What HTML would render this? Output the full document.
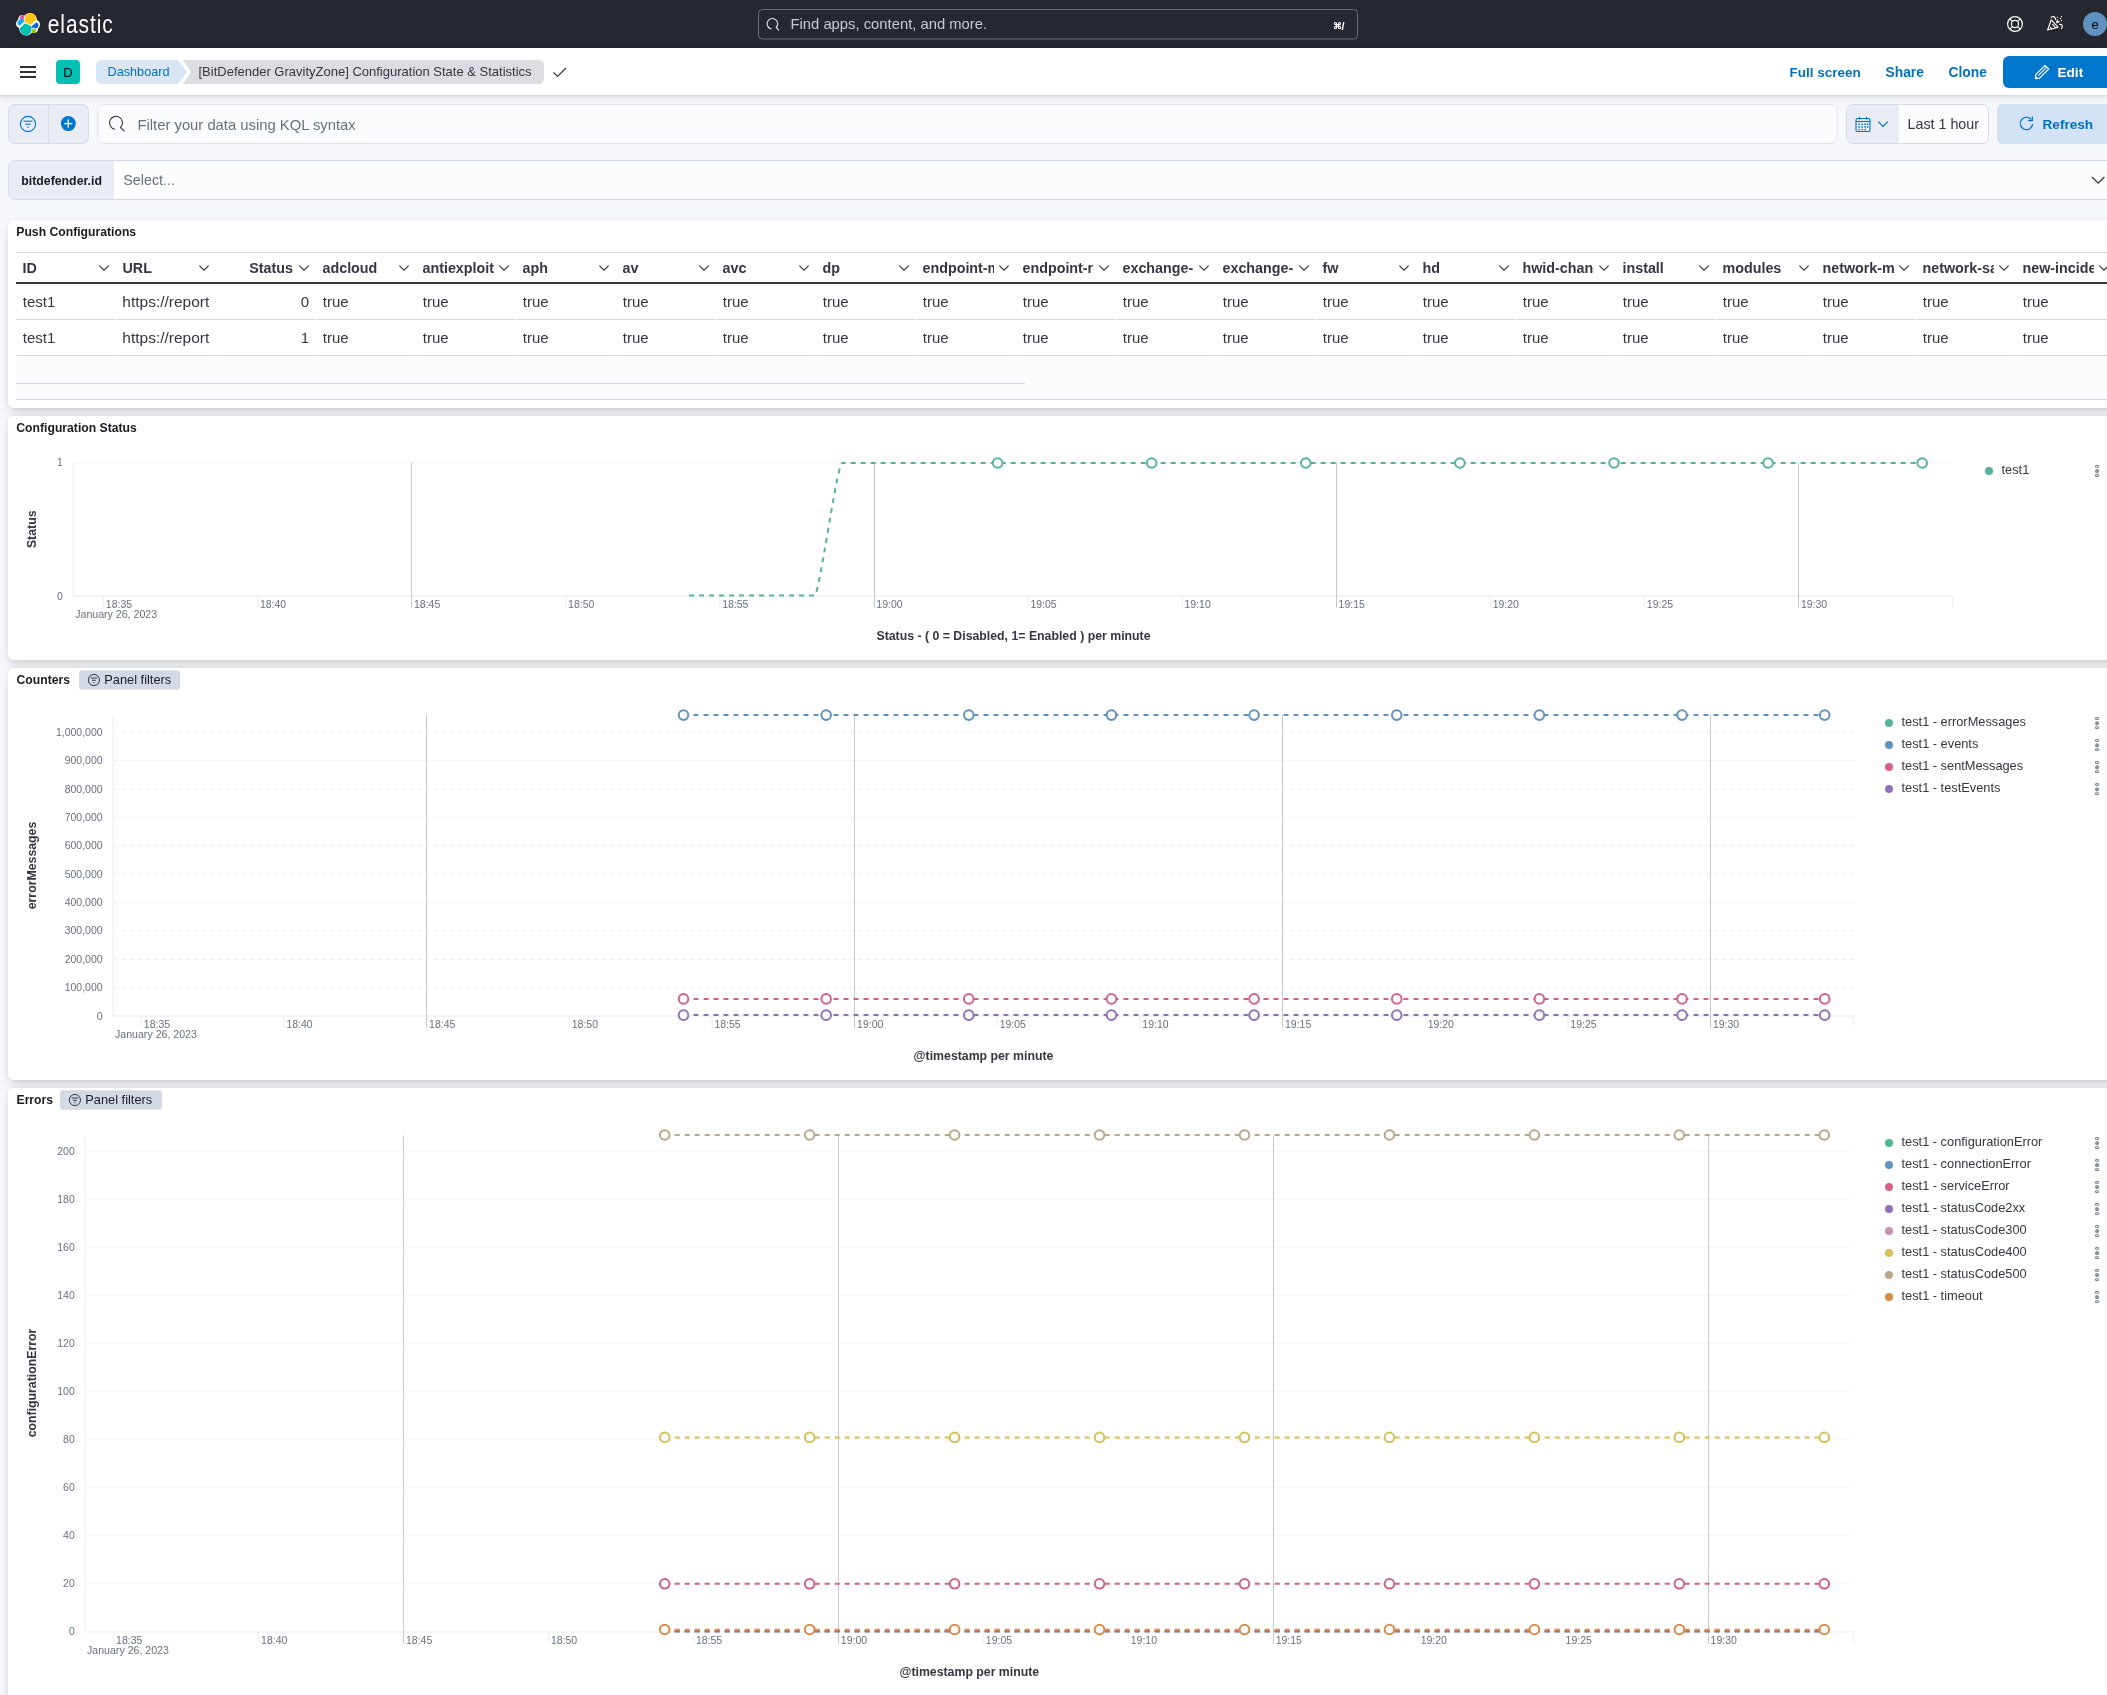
<!DOCTYPE html>
<html><head><meta charset="utf-8"><title>[BitDefender GravityZone] Configuration State &amp; Statistics - Elastic</title>
<style>
html,body{margin:0;padding:0;width:2107px;height:1695px;overflow:hidden;background:#f7f8fc;font-family:"Liberation Sans", sans-serif;}
#root{position:relative;width:2107px;height:1695px;overflow:hidden}
svg text{font-family:"Liberation Sans", sans-serif;}
</style></head><body><div id="root">
<div style="position:absolute;left:0px;top:0px;width:2107px;height:1695px;background:#f7f8fc"></div><div style="position:absolute;left:0px;top:0px;width:2107px;height:48px;background:#25282f"></div><div style="position:absolute;left:0px;top:48px;width:2107px;height:47px;background:#fff;box-shadow:0 1px 2px rgba(0,0,0,0.10),0 3px 8px rgba(60,70,90,0.10)"></div><div style="position:absolute;left:8px;top:220px;width:2140px;height:188px;background:#fff;border-radius:6px;box-shadow:0 0.9px 4px -1px rgba(0,0,0,0.08),0 2.6px 8px -1px rgba(0,0,0,0.06),0 5.7px 12px -1px rgba(0,0,0,0.05),0 15px 15px -1px rgba(0,0,0,0.04)"></div><div style="position:absolute;left:8px;top:416px;width:2140px;height:244px;background:#fff;border-radius:6px;box-shadow:0 0.9px 4px -1px rgba(0,0,0,0.08),0 2.6px 8px -1px rgba(0,0,0,0.06),0 5.7px 12px -1px rgba(0,0,0,0.05),0 15px 15px -1px rgba(0,0,0,0.04)"></div><div style="position:absolute;left:8px;top:668px;width:2140px;height:412px;background:#fff;border-radius:6px;box-shadow:0 0.9px 4px -1px rgba(0,0,0,0.08),0 2.6px 8px -1px rgba(0,0,0,0.06),0 5.7px 12px -1px rgba(0,0,0,0.05),0 15px 15px -1px rgba(0,0,0,0.04)"></div><div style="position:absolute;left:8px;top:1088px;width:2140px;height:612px;background:#fff;border-radius:6px;box-shadow:0 0.9px 4px -1px rgba(0,0,0,0.08),0 2.6px 8px -1px rgba(0,0,0,0.06),0 5.7px 12px -1px rgba(0,0,0,0.05),0 15px 15px -1px rgba(0,0,0,0.04)"></div>
<svg width="2107" height="1695" viewBox="0 0 2107 1695" style="position:absolute;left:0;top:0;will-change:transform">
<g transform="translate(16,12) scale(0.75)">
<path fill="#FFF" d="M32 16.77c0-2.68-1.66-5.03-4.17-5.94a9.65 9.65 0 0 0-.2-2.05A9.6 9.6 0 0 0 10.9 4.94 5.05 5.05 0 0 0 8.110 4.1a5.1 5.1 0 0 0-5.04 5.92A6.29 6.29 0 0 0 0 15.33c0 2.67 1.68 5.04 4.2 5.950a9.750 9.750 0 0 0 .19 2.04 9.54 9.54 0 0 0 17.22 3.75 5.02 5.02 0 0 0 2.78.85 5.1 5.1 0 0 0 5.04-5.94A6.3 6.3 0 0 0 32 16.78"/>
<path fill="#FEC514" d="m12.6 13.8 7 3.2 7.07-6.2a7.9 7.9 0 0 0 .15-1.56 7.9 7.9 0 0 0-14.4-4.5l-1.17 6.1 1.36 2.9"/>
<path fill="#00BFB3" d="M5.36 21.2a8 8 0 0 0-.15 1.6 7.92 7.920 0 0 0 14.46 4.460l1.16-6.07-1.55-2.97-7.03-3.2-6.9 6.2"/>
<path fill="#F04E98" d="m5.32 9.03 4.8 1.14 1.06-5.43a3.82 3.82 0 0 0-5.86 4.29"/>
<path fill="#1BA9F5" d="M4.9 10.17a4.3 4.3 0 0 0-2.95 4.12c0 1.84 1.13 3.48 2.84 4.13l6.73-6.08-1.24-2.64-5.38-1.53"/>
<path fill="#93C90E" d="M20.84 27.27a3.8 3.8 0 0 0 5.86-4.29l-4.8-1.12-1.06 5.41"/>
<path fill="#0B64DD" d="m21.8 20.7 5.28 1.23a4.3 4.3 0 0 0 2.95-4.13 4.4 4.4 0 0 0-2.85-4.12l-6.9 6.05 1.52 2.97"/>
</g>
<text x="0.00" y="0.00" font-size="25.5" fill="#ffffff" font-weight="normal" text-anchor="start" letter-spacing="1.15" transform="translate(47.8 32.9) scale(0.82 1)">elastic</text>
<rect x="758.5" y="9.5" width="599" height="29.5" rx="4" fill="#25282f" stroke="#696d77" stroke-width="1"/>
<path d="M771.5 29 A5.3 5.3 0 1 1 776.2 27.5 L779 30.3" fill="none" stroke="#e6e8ec" stroke-width="1.1"/>
<text x="790.50" y="28.70" font-size="14.8" fill="#c8cace" font-weight="normal" text-anchor="start" >Find apps, content, and more.</text>
<text x="1333.00" y="29.30" font-size="9" fill="#ffffff" font-weight="bold" text-anchor="start" >⌘</text>
<text x="1341.50" y="30.00" font-size="11" fill="#ffffff" font-weight="bold" text-anchor="start" >/</text>
<g fill="none" stroke="#fff" stroke-width="1.2">
<circle cx="2015" cy="24" r="7.4"/><circle cx="2015" cy="24" r="3.6"/>
<line x1="2009.8" y1="18.8" x2="2012.4" y2="21.4"/><line x1="2020.2" y1="18.8" x2="2017.6" y2="21.4"/>
<line x1="2009.8" y1="29.2" x2="2012.4" y2="26.6"/><line x1="2020.2" y1="29.2" x2="2017.6" y2="26.6"/>
</g>
<g fill="none" stroke="#fff" stroke-width="1.15" stroke-linejoin="round" stroke-linecap="round">
<path d="M2047.6 30 L2051.3 19.8 L2058 27.2 Z"/>
<path d="M2052.6 24.4 L2055.8 27.8"/><path d="M2050.5 27.3 L2051.8 28.8"/>
<path d="M2051.2 17.3 Q2053.6 15.4 2055.3 18.2 L2055.6 19.6"/>
<path d="M2057.4 19.8 L2056.6 22.6 L2059.2 21.6"/>
<path d="M2059.7 24.4 Q2062.6 24.2 2062.3 26.6 L2061.5 28.6"/>
</g>
<g fill="#fff"><circle cx="2057.4" cy="17.3" r="0.65"/><circle cx="2061.4" cy="16.5" r="0.65"/><circle cx="2060.4" cy="18.5" r="0.65"/><circle cx="2061.4" cy="20.4" r="0.65"/></g>
<circle cx="2095" cy="24" r="12" fill="#6092c0"/>
<text x="2095.00" y="28.50" font-size="13" fill="#000000" font-weight="normal" text-anchor="middle" >e</text>
<rect x="20" y="66.1" width="16" height="1.8" rx="0" fill="#1a1c21" />
<rect x="20" y="71.1" width="16" height="1.8" rx="0" fill="#1a1c21" />
<rect x="20" y="76.1" width="16" height="1.8" rx="0" fill="#1a1c21" />
<rect x="56" y="60" width="24" height="24" rx="4" fill="#00bfb3" />
<text x="68.00" y="76.80" font-size="13" fill="#000" font-weight="normal" text-anchor="middle" >D</text>
<path d="M183 60 H538 Q544 60 544 66 V78 Q544 84 538 84 H183 L191 72 Z" fill="#dcdde0"/>
<path d="M102 60 H178 L187 72 L178 84 H102 Q96 84 96 78 V66 Q96 60 102 60 Z" fill="#d9e7f5"/>
<text x="107.50" y="75.90" font-size="12.7" fill="#0071c2" font-weight="normal" text-anchor="start" >Dashboard</text>
<text x="198.50" y="75.60" font-size="13" fill="#343741" font-weight="normal" text-anchor="start" >[BitDefender GravityZone] Configuration State &amp; Statistics</text>
<path d="M553.5 72.5 L557.5 76.5 L566 68" fill="none" stroke="#343741" stroke-width="1.2"/>
<text x="1789.50" y="77.00" font-size="13.5" fill="#0071c2" font-weight="bold" text-anchor="start" >Full screen</text>
<text x="1885.50" y="77.00" font-size="13.8" fill="#0071c2" font-weight="bold" text-anchor="start" >Share</text>
<text x="1948.50" y="77.00" font-size="13.8" fill="#0071c2" font-weight="bold" text-anchor="start" >Clone</text>
<rect x="2003" y="56" width="120" height="32" rx="6" fill="#0077cc" />
<g fill="none" stroke="#fff" stroke-width="1.1" stroke-linejoin="round">
<path d="M2035.4 78.6 L2035.7 74.6 L2045 65.3 L2048.7 69 L2039.4 78.3 Z"/><path d="M2038.3 75.6 L2046.2 67.7"/></g>
<path d="M2035.2 75.2 L2035.2 79 L2039 79 Z" fill="#fff"/>
<text x="2057.50" y="77.00" font-size="13.6" fill="#ffffff" font-weight="bold" text-anchor="start" >Edit</text>
<rect x="8.5" y="104.5" width="80" height="39" rx="6" fill="#e9edf3" stroke="#d3dae6" stroke-width="1"/>
<line x1="48.50" y1="105.00" x2="48.50" y2="143.00" stroke="#d3dae6" stroke-width="1" />
<g fill="none" stroke="#0071c2" stroke-width="1.1"><circle cx="28" cy="124" r="7.6"/><line x1="23.5" y1="121.2" x2="32.5" y2="121.2"/><line x1="25.3" y1="124.2" x2="30.7" y2="124.2"/><line x1="27.2" y1="127.2" x2="28.8" y2="127.2"/></g>
<circle cx="68.3" cy="123.6" r="7.5" fill="#0077cc"/><g stroke="#fff" stroke-width="1.4"><line x1="64.3" y1="123.6" x2="72.3" y2="123.6"/><line x1="68.3" y1="119.6" x2="68.3" y2="127.6"/></g>
<rect x="98" y="104.5" width="1739" height="39" rx="6" fill="#fbfcfd" stroke="#dfe5ef" stroke-width="1"/>
<path d="M114.9 129.2 A6.5 6.5 0 1 1 120.6 127.4 L124.5 131.3" fill="none" stroke="#343741" stroke-width="1.15"/>
<text x="137.50" y="130.00" font-size="14.8" fill="#69707d" font-weight="normal" text-anchor="start" >Filter your data using KQL syntax</text>
<rect x="1846.5" y="104.5" width="142" height="39" rx="6" fill="#fbfcfd" stroke="#d3dae6" stroke-width="1"/>
<path d="M1852.5 105 H1899 V143 H1852.5 Q1847 143 1847 137.5 V110.5 Q1847 105 1852.5 105 Z" fill="#e9edf3"/>
<g fill="none" stroke="#0071c2" stroke-width="1.1"><rect x="1856" y="118.5" width="14" height="13" rx="1.5"/><line x1="1856" y1="121.5" x2="1870" y2="121.5"/><line x1="1859.5" y1="116.8" x2="1859.5" y2="119.5"/><line x1="1866.5" y1="116.8" x2="1866.5" y2="119.5"/></g>
<g fill="#0071c2"><rect x="1858.3" y="123.5" width="1.6" height="1.4"/><rect x="1861.3" y="123.5" width="1.6" height="1.4"/><rect x="1864.3" y="123.5" width="1.6" height="1.4"/><rect x="1867" y="123.5" width="1.4" height="1.4"/>
<rect x="1858.3" y="126.3" width="1.6" height="1.4"/><rect x="1861.3" y="126.3" width="1.6" height="1.4"/><rect x="1864.3" y="126.3" width="1.6" height="1.4"/><rect x="1867" y="126.3" width="1.4" height="1.4"/>
<rect x="1858.3" y="129" width="1.6" height="1.2"/><rect x="1861.3" y="129" width="1.6" height="1.2"/><rect x="1864.3" y="129" width="1.6" height="1.2"/></g>
<path d="M1878.3 121.6 L1883 126.3 L1887.7 121.6" fill="none" stroke="#0071c2" stroke-width="1.2"/>
<text x="1907.50" y="129.20" font-size="14.3" fill="#343741" font-weight="normal" text-anchor="start" >Last 1 hour</text>
<rect x="1997" y="104" width="130" height="40" rx="6" fill="#d3e3f5" />
<path d="M2031.2 119.5 A6.2 6.2 0 1 0 2032.6 124" fill="none" stroke="#0071c2" stroke-width="1.2"/><path d="M2032.3 116.5 V120.6 H2028.3" fill="none" stroke="#0071c2" stroke-width="1.2"/>
<text x="2042.50" y="129.20" font-size="13.6" fill="#0071c2" font-weight="bold" text-anchor="start" >Refresh</text>
<rect x="8.5" y="160.5" width="2120" height="39" rx="6" fill="#fbfcfd" stroke="#d3dae6" stroke-width="1"/>
<path d="M14.5 161 H114 V199 H14.5 Q9 199 9 193.5 V166.5 Q9 161 14.5 161 Z" fill="#e9edf3"/>
<text x="21.30" y="184.70" font-size="12.3" fill="#1a1c21" font-weight="bold" text-anchor="start" >bitdefender.id</text>
<text x="123.30" y="184.70" font-size="14.3" fill="#69707d" font-weight="normal" text-anchor="start" >Select...</text>
<path d="M2092 177 L2098.2 183.2 L2104.4 177" fill="none" stroke="#343741" stroke-width="1.3"/>
<text x="16.30" y="235.80" font-size="12.2" fill="#1a1c21" font-weight="bold" text-anchor="start" >Push Configurations</text>
<line x1="16.00" y1="252.50" x2="2107.00" y2="252.50" stroke="#d3dae6" stroke-width="1" />
<defs><clipPath id="hc0"><rect x="22" y="255" width="72" height="25"/></clipPath><clipPath id="hc1"><rect x="122" y="255" width="72" height="25"/></clipPath><clipPath id="hc2"><rect x="222" y="255" width="72" height="25"/></clipPath><clipPath id="hc3"><rect x="322" y="255" width="72" height="25"/></clipPath><clipPath id="hc4"><rect x="422" y="255" width="72" height="25"/></clipPath><clipPath id="hc5"><rect x="522" y="255" width="72" height="25"/></clipPath><clipPath id="hc6"><rect x="622" y="255" width="72" height="25"/></clipPath><clipPath id="hc7"><rect x="722" y="255" width="72" height="25"/></clipPath><clipPath id="hc8"><rect x="822" y="255" width="72" height="25"/></clipPath><clipPath id="hc9"><rect x="922" y="255" width="72" height="25"/></clipPath><clipPath id="hc10"><rect x="1022" y="255" width="72" height="25"/></clipPath><clipPath id="hc11"><rect x="1122" y="255" width="72" height="25"/></clipPath><clipPath id="hc12"><rect x="1222" y="255" width="72" height="25"/></clipPath><clipPath id="hc13"><rect x="1322" y="255" width="72" height="25"/></clipPath><clipPath id="hc14"><rect x="1422" y="255" width="72" height="25"/></clipPath><clipPath id="hc15"><rect x="1522" y="255" width="72" height="25"/></clipPath><clipPath id="hc16"><rect x="1622" y="255" width="72" height="25"/></clipPath><clipPath id="hc17"><rect x="1722" y="255" width="72" height="25"/></clipPath><clipPath id="hc18"><rect x="1822" y="255" width="72" height="25"/></clipPath><clipPath id="hc19"><rect x="1922" y="255" width="72" height="25"/></clipPath><clipPath id="hc20"><rect x="2022" y="255" width="72" height="25"/></clipPath></defs>
<text x="22.50" y="273.00" font-size="14.3" fill="#343741" font-weight="bold" text-anchor="start" clip-path="url(#hc0)">ID</text>
<path d="M99.4 265.6 L104.0 270.2 L108.6 265.6" fill="none" stroke="#343741" stroke-width="1.2"/>
<text x="122.50" y="273.00" font-size="14.3" fill="#343741" font-weight="bold" text-anchor="start" clip-path="url(#hc1)">URL</text>
<path d="M199.4 265.6 L204.0 270.2 L208.6 265.6" fill="none" stroke="#343741" stroke-width="1.2"/>
<text x="293.00" y="273.00" font-size="14.3" fill="#343741" font-weight="bold" text-anchor="end" >Status</text>
<path d="M299.4 265.6 L304.0 270.2 L308.6 265.6" fill="none" stroke="#343741" stroke-width="1.2"/>
<text x="322.50" y="273.00" font-size="14.3" fill="#343741" font-weight="bold" text-anchor="start" clip-path="url(#hc3)">adcloud</text>
<path d="M399.4 265.6 L404.0 270.2 L408.6 265.6" fill="none" stroke="#343741" stroke-width="1.2"/>
<text x="422.50" y="273.00" font-size="14.3" fill="#343741" font-weight="bold" text-anchor="start" clip-path="url(#hc4)">antiexploit</text>
<path d="M499.4 265.6 L504.0 270.2 L508.6 265.6" fill="none" stroke="#343741" stroke-width="1.2"/>
<text x="522.50" y="273.00" font-size="14.3" fill="#343741" font-weight="bold" text-anchor="start" clip-path="url(#hc5)">aph</text>
<path d="M599.4 265.6 L604.0 270.2 L608.6 265.6" fill="none" stroke="#343741" stroke-width="1.2"/>
<text x="622.50" y="273.00" font-size="14.3" fill="#343741" font-weight="bold" text-anchor="start" clip-path="url(#hc6)">av</text>
<path d="M699.4 265.6 L704.0 270.2 L708.6 265.6" fill="none" stroke="#343741" stroke-width="1.2"/>
<text x="722.50" y="273.00" font-size="14.3" fill="#343741" font-weight="bold" text-anchor="start" clip-path="url(#hc7)">avc</text>
<path d="M799.4 265.6 L804.0 270.2 L808.6 265.6" fill="none" stroke="#343741" stroke-width="1.2"/>
<text x="822.50" y="273.00" font-size="14.3" fill="#343741" font-weight="bold" text-anchor="start" clip-path="url(#hc8)">dp</text>
<path d="M899.4 265.6 L904.0 270.2 L908.6 265.6" fill="none" stroke="#343741" stroke-width="1.2"/>
<text x="922.50" y="273.00" font-size="14.3" fill="#343741" font-weight="bold" text-anchor="start" clip-path="url(#hc9)">endpoint-moved</text>
<path d="M999.4 265.6 L1004.0 270.2 L1008.6 265.6" fill="none" stroke="#343741" stroke-width="1.2"/>
<text x="1022.50" y="273.00" font-size="14.3" fill="#343741" font-weight="bold" text-anchor="start" clip-path="url(#hc10)">endpoint-registration</text>
<path d="M1099.4 265.6 L1104.0 270.2 L1108.6 265.6" fill="none" stroke="#343741" stroke-width="1.2"/>
<text x="1122.50" y="273.00" font-size="14.3" fill="#343741" font-weight="bold" text-anchor="start" clip-path="url(#hc11)">exchange-malware</text>
<path d="M1199.4 265.6 L1204.0 270.2 L1208.6 265.6" fill="none" stroke="#343741" stroke-width="1.2"/>
<text x="1222.50" y="273.00" font-size="14.3" fill="#343741" font-weight="bold" text-anchor="start" clip-path="url(#hc12)">exchange-user-credentials</text>
<path d="M1299.4 265.6 L1304.0 270.2 L1308.6 265.6" fill="none" stroke="#343741" stroke-width="1.2"/>
<text x="1322.50" y="273.00" font-size="14.3" fill="#343741" font-weight="bold" text-anchor="start" clip-path="url(#hc13)">fw</text>
<path d="M1399.4 265.6 L1404.0 270.2 L1408.6 265.6" fill="none" stroke="#343741" stroke-width="1.2"/>
<text x="1422.50" y="273.00" font-size="14.3" fill="#343741" font-weight="bold" text-anchor="start" clip-path="url(#hc14)">hd</text>
<path d="M1499.4 265.6 L1504.0 270.2 L1508.6 265.6" fill="none" stroke="#343741" stroke-width="1.2"/>
<text x="1522.50" y="273.00" font-size="14.3" fill="#343741" font-weight="bold" text-anchor="start" clip-path="url(#hc15)">hwid-change</text>
<path d="M1599.4 265.6 L1604.0 270.2 L1608.6 265.6" fill="none" stroke="#343741" stroke-width="1.2"/>
<text x="1622.50" y="273.00" font-size="14.3" fill="#343741" font-weight="bold" text-anchor="start" clip-path="url(#hc16)">install</text>
<path d="M1699.4 265.6 L1704.0 270.2 L1708.6 265.6" fill="none" stroke="#343741" stroke-width="1.2"/>
<text x="1722.50" y="273.00" font-size="14.3" fill="#343741" font-weight="bold" text-anchor="start" clip-path="url(#hc17)">modules</text>
<path d="M1799.4 265.6 L1804.0 270.2 L1808.6 265.6" fill="none" stroke="#343741" stroke-width="1.2"/>
<text x="1822.50" y="273.00" font-size="14.3" fill="#343741" font-weight="bold" text-anchor="start" clip-path="url(#hc18)">network-monitoring</text>
<path d="M1899.4 265.6 L1904.0 270.2 L1908.6 265.6" fill="none" stroke="#343741" stroke-width="1.2"/>
<text x="1922.50" y="273.00" font-size="14.3" fill="#343741" font-weight="bold" text-anchor="start" clip-path="url(#hc19)">network-sandboxing</text>
<path d="M1999.4 265.6 L2004.0 270.2 L2008.6 265.6" fill="none" stroke="#343741" stroke-width="1.2"/>
<text x="2022.50" y="273.00" font-size="14.3" fill="#343741" font-weight="bold" text-anchor="start" clip-path="url(#hc20)">new-incident</text>
<path d="M2099.4 265.6 L2104.0 270.2 L2108.6 265.6" fill="none" stroke="#343741" stroke-width="1.2"/>
<rect x="16" y="282" width="2107" height="2" rx="0" fill="#343741" />
<line x1="16.50" y1="319.50" x2="115.50" y2="319.50" stroke="#d3dae6" stroke-width="1" />
<text x="22.80" y="306.80" font-size="15" fill="#343741" font-weight="normal" text-anchor="start" >test1</text>
<line x1="116.50" y1="319.50" x2="215.50" y2="319.50" stroke="#d3dae6" stroke-width="1" />
<clipPath id="uc0"><rect x="122" y="284" width="87.5" height="36"/></clipPath>
<text x="122.30" y="306.80" font-size="15.5" fill="#343741" font-weight="normal" text-anchor="start" clip-path="url(#uc0)">https://report</text>
<line x1="216.50" y1="319.50" x2="315.50" y2="319.50" stroke="#d3dae6" stroke-width="1" />
<text x="309.00" y="306.80" font-size="15" fill="#343741" font-weight="normal" text-anchor="end" >0</text>
<line x1="316.50" y1="319.50" x2="415.50" y2="319.50" stroke="#d3dae6" stroke-width="1" />
<text x="322.80" y="306.80" font-size="15" fill="#343741" font-weight="normal" text-anchor="start" >true</text>
<line x1="416.50" y1="319.50" x2="515.50" y2="319.50" stroke="#d3dae6" stroke-width="1" />
<text x="422.80" y="306.80" font-size="15" fill="#343741" font-weight="normal" text-anchor="start" >true</text>
<line x1="516.50" y1="319.50" x2="615.50" y2="319.50" stroke="#d3dae6" stroke-width="1" />
<text x="522.80" y="306.80" font-size="15" fill="#343741" font-weight="normal" text-anchor="start" >true</text>
<line x1="616.50" y1="319.50" x2="715.50" y2="319.50" stroke="#d3dae6" stroke-width="1" />
<text x="622.80" y="306.80" font-size="15" fill="#343741" font-weight="normal" text-anchor="start" >true</text>
<line x1="716.50" y1="319.50" x2="815.50" y2="319.50" stroke="#d3dae6" stroke-width="1" />
<text x="722.80" y="306.80" font-size="15" fill="#343741" font-weight="normal" text-anchor="start" >true</text>
<line x1="816.50" y1="319.50" x2="915.50" y2="319.50" stroke="#d3dae6" stroke-width="1" />
<text x="822.80" y="306.80" font-size="15" fill="#343741" font-weight="normal" text-anchor="start" >true</text>
<line x1="916.50" y1="319.50" x2="1015.50" y2="319.50" stroke="#d3dae6" stroke-width="1" />
<text x="922.80" y="306.80" font-size="15" fill="#343741" font-weight="normal" text-anchor="start" >true</text>
<line x1="1016.50" y1="319.50" x2="1115.50" y2="319.50" stroke="#d3dae6" stroke-width="1" />
<text x="1022.80" y="306.80" font-size="15" fill="#343741" font-weight="normal" text-anchor="start" >true</text>
<line x1="1116.50" y1="319.50" x2="1215.50" y2="319.50" stroke="#d3dae6" stroke-width="1" />
<text x="1122.80" y="306.80" font-size="15" fill="#343741" font-weight="normal" text-anchor="start" >true</text>
<line x1="1216.50" y1="319.50" x2="1315.50" y2="319.50" stroke="#d3dae6" stroke-width="1" />
<text x="1222.80" y="306.80" font-size="15" fill="#343741" font-weight="normal" text-anchor="start" >true</text>
<line x1="1316.50" y1="319.50" x2="1415.50" y2="319.50" stroke="#d3dae6" stroke-width="1" />
<text x="1322.80" y="306.80" font-size="15" fill="#343741" font-weight="normal" text-anchor="start" >true</text>
<line x1="1416.50" y1="319.50" x2="1515.50" y2="319.50" stroke="#d3dae6" stroke-width="1" />
<text x="1422.80" y="306.80" font-size="15" fill="#343741" font-weight="normal" text-anchor="start" >true</text>
<line x1="1516.50" y1="319.50" x2="1615.50" y2="319.50" stroke="#d3dae6" stroke-width="1" />
<text x="1522.80" y="306.80" font-size="15" fill="#343741" font-weight="normal" text-anchor="start" >true</text>
<line x1="1616.50" y1="319.50" x2="1715.50" y2="319.50" stroke="#d3dae6" stroke-width="1" />
<text x="1622.80" y="306.80" font-size="15" fill="#343741" font-weight="normal" text-anchor="start" >true</text>
<line x1="1716.50" y1="319.50" x2="1815.50" y2="319.50" stroke="#d3dae6" stroke-width="1" />
<text x="1722.80" y="306.80" font-size="15" fill="#343741" font-weight="normal" text-anchor="start" >true</text>
<line x1="1816.50" y1="319.50" x2="1915.50" y2="319.50" stroke="#d3dae6" stroke-width="1" />
<text x="1822.80" y="306.80" font-size="15" fill="#343741" font-weight="normal" text-anchor="start" >true</text>
<line x1="1916.50" y1="319.50" x2="2015.50" y2="319.50" stroke="#d3dae6" stroke-width="1" />
<text x="1922.80" y="306.80" font-size="15" fill="#343741" font-weight="normal" text-anchor="start" >true</text>
<line x1="2016.50" y1="319.50" x2="2115.50" y2="319.50" stroke="#d3dae6" stroke-width="1" />
<text x="2022.80" y="306.80" font-size="15" fill="#343741" font-weight="normal" text-anchor="start" >true</text>
<line x1="16.50" y1="355.50" x2="115.50" y2="355.50" stroke="#d3dae6" stroke-width="1" />
<text x="22.80" y="342.80" font-size="15" fill="#343741" font-weight="normal" text-anchor="start" >test1</text>
<line x1="116.50" y1="355.50" x2="215.50" y2="355.50" stroke="#d3dae6" stroke-width="1" />
<clipPath id="uc1"><rect x="122" y="320" width="87.5" height="36"/></clipPath>
<text x="122.30" y="342.80" font-size="15.5" fill="#343741" font-weight="normal" text-anchor="start" clip-path="url(#uc1)">https://report</text>
<line x1="216.50" y1="355.50" x2="315.50" y2="355.50" stroke="#d3dae6" stroke-width="1" />
<text x="309.00" y="342.80" font-size="15" fill="#343741" font-weight="normal" text-anchor="end" >1</text>
<line x1="316.50" y1="355.50" x2="415.50" y2="355.50" stroke="#d3dae6" stroke-width="1" />
<text x="322.80" y="342.80" font-size="15" fill="#343741" font-weight="normal" text-anchor="start" >true</text>
<line x1="416.50" y1="355.50" x2="515.50" y2="355.50" stroke="#d3dae6" stroke-width="1" />
<text x="422.80" y="342.80" font-size="15" fill="#343741" font-weight="normal" text-anchor="start" >true</text>
<line x1="516.50" y1="355.50" x2="615.50" y2="355.50" stroke="#d3dae6" stroke-width="1" />
<text x="522.80" y="342.80" font-size="15" fill="#343741" font-weight="normal" text-anchor="start" >true</text>
<line x1="616.50" y1="355.50" x2="715.50" y2="355.50" stroke="#d3dae6" stroke-width="1" />
<text x="622.80" y="342.80" font-size="15" fill="#343741" font-weight="normal" text-anchor="start" >true</text>
<line x1="716.50" y1="355.50" x2="815.50" y2="355.50" stroke="#d3dae6" stroke-width="1" />
<text x="722.80" y="342.80" font-size="15" fill="#343741" font-weight="normal" text-anchor="start" >true</text>
<line x1="816.50" y1="355.50" x2="915.50" y2="355.50" stroke="#d3dae6" stroke-width="1" />
<text x="822.80" y="342.80" font-size="15" fill="#343741" font-weight="normal" text-anchor="start" >true</text>
<line x1="916.50" y1="355.50" x2="1015.50" y2="355.50" stroke="#d3dae6" stroke-width="1" />
<text x="922.80" y="342.80" font-size="15" fill="#343741" font-weight="normal" text-anchor="start" >true</text>
<line x1="1016.50" y1="355.50" x2="1115.50" y2="355.50" stroke="#d3dae6" stroke-width="1" />
<text x="1022.80" y="342.80" font-size="15" fill="#343741" font-weight="normal" text-anchor="start" >true</text>
<line x1="1116.50" y1="355.50" x2="1215.50" y2="355.50" stroke="#d3dae6" stroke-width="1" />
<text x="1122.80" y="342.80" font-size="15" fill="#343741" font-weight="normal" text-anchor="start" >true</text>
<line x1="1216.50" y1="355.50" x2="1315.50" y2="355.50" stroke="#d3dae6" stroke-width="1" />
<text x="1222.80" y="342.80" font-size="15" fill="#343741" font-weight="normal" text-anchor="start" >true</text>
<line x1="1316.50" y1="355.50" x2="1415.50" y2="355.50" stroke="#d3dae6" stroke-width="1" />
<text x="1322.80" y="342.80" font-size="15" fill="#343741" font-weight="normal" text-anchor="start" >true</text>
<line x1="1416.50" y1="355.50" x2="1515.50" y2="355.50" stroke="#d3dae6" stroke-width="1" />
<text x="1422.80" y="342.80" font-size="15" fill="#343741" font-weight="normal" text-anchor="start" >true</text>
<line x1="1516.50" y1="355.50" x2="1615.50" y2="355.50" stroke="#d3dae6" stroke-width="1" />
<text x="1522.80" y="342.80" font-size="15" fill="#343741" font-weight="normal" text-anchor="start" >true</text>
<line x1="1616.50" y1="355.50" x2="1715.50" y2="355.50" stroke="#d3dae6" stroke-width="1" />
<text x="1622.80" y="342.80" font-size="15" fill="#343741" font-weight="normal" text-anchor="start" >true</text>
<line x1="1716.50" y1="355.50" x2="1815.50" y2="355.50" stroke="#d3dae6" stroke-width="1" />
<text x="1722.80" y="342.80" font-size="15" fill="#343741" font-weight="normal" text-anchor="start" >true</text>
<line x1="1816.50" y1="355.50" x2="1915.50" y2="355.50" stroke="#d3dae6" stroke-width="1" />
<text x="1822.80" y="342.80" font-size="15" fill="#343741" font-weight="normal" text-anchor="start" >true</text>
<line x1="1916.50" y1="355.50" x2="2015.50" y2="355.50" stroke="#d3dae6" stroke-width="1" />
<text x="1922.80" y="342.80" font-size="15" fill="#343741" font-weight="normal" text-anchor="start" >true</text>
<line x1="2016.50" y1="355.50" x2="2115.50" y2="355.50" stroke="#d3dae6" stroke-width="1" />
<text x="2022.80" y="342.80" font-size="15" fill="#343741" font-weight="normal" text-anchor="start" >true</text>
<rect x="16" y="356" width="2107" height="43" rx="0" fill="#fafbfd" />
<line x1="16.00" y1="383.50" x2="1025.00" y2="383.50" stroke="#d3dae6" stroke-width="1" />
<line x1="16.00" y1="399.50" x2="2107.00" y2="399.50" stroke="#d3dae6" stroke-width="1" />
<text x="16.30" y="431.90" font-size="12.2" fill="#1a1c21" font-weight="bold" text-anchor="start" >Configuration Status</text>
<line x1="73.20" y1="462.60" x2="73.20" y2="596.00" stroke="#eef0f4" stroke-width="1.3" />
<line x1="73.20" y1="462.60" x2="1953.00" y2="462.60" stroke="#eceef2" stroke-width="1" stroke-dasharray="4 4"/>
<text x="62.80" y="466.20" font-size="10.5" fill="#69707d" font-weight="normal" text-anchor="end" >1</text>
<text x="62.80" y="599.60" font-size="10.5" fill="#69707d" font-weight="normal" text-anchor="end" >0</text>
<line x1="73.20" y1="596.00" x2="1953.00" y2="596.00" stroke="#eef0f4" stroke-width="1.3" />
<line x1="103.50" y1="596.00" x2="103.50" y2="607.70" stroke="#eef0f4" stroke-width="1.2" />
<text x="105.80" y="607.70" font-size="10.5" fill="#69707d" font-weight="normal" text-anchor="start" >18:35</text>
<line x1="257.60" y1="596.00" x2="257.60" y2="607.70" stroke="#eef0f4" stroke-width="1.2" />
<text x="259.90" y="607.70" font-size="10.5" fill="#69707d" font-weight="normal" text-anchor="start" >18:40</text>
<line x1="411.50" y1="462.60" x2="411.50" y2="607.70" stroke="#c6c8cc" stroke-width="1" />
<text x="414.00" y="607.70" font-size="10.5" fill="#69707d" font-weight="normal" text-anchor="start" >18:45</text>
<line x1="565.80" y1="596.00" x2="565.80" y2="607.70" stroke="#eef0f4" stroke-width="1.2" />
<text x="568.10" y="607.70" font-size="10.5" fill="#69707d" font-weight="normal" text-anchor="start" >18:50</text>
<line x1="719.90" y1="596.00" x2="719.90" y2="607.70" stroke="#eef0f4" stroke-width="1.2" />
<text x="722.20" y="607.70" font-size="10.5" fill="#69707d" font-weight="normal" text-anchor="start" >18:55</text>
<line x1="874.50" y1="462.60" x2="874.50" y2="607.70" stroke="#c6c8cc" stroke-width="1" />
<text x="876.30" y="607.70" font-size="10.5" fill="#69707d" font-weight="normal" text-anchor="start" >19:00</text>
<line x1="1028.10" y1="596.00" x2="1028.10" y2="607.70" stroke="#eef0f4" stroke-width="1.2" />
<text x="1030.40" y="607.70" font-size="10.5" fill="#69707d" font-weight="normal" text-anchor="start" >19:05</text>
<line x1="1182.20" y1="596.00" x2="1182.20" y2="607.70" stroke="#eef0f4" stroke-width="1.2" />
<text x="1184.50" y="607.70" font-size="10.5" fill="#69707d" font-weight="normal" text-anchor="start" >19:10</text>
<line x1="1336.50" y1="462.60" x2="1336.50" y2="607.70" stroke="#c6c8cc" stroke-width="1" />
<text x="1338.60" y="607.70" font-size="10.5" fill="#69707d" font-weight="normal" text-anchor="start" >19:15</text>
<line x1="1490.40" y1="596.00" x2="1490.40" y2="607.70" stroke="#eef0f4" stroke-width="1.2" />
<text x="1492.70" y="607.70" font-size="10.5" fill="#69707d" font-weight="normal" text-anchor="start" >19:20</text>
<line x1="1644.50" y1="596.00" x2="1644.50" y2="607.70" stroke="#eef0f4" stroke-width="1.2" />
<text x="1646.80" y="607.70" font-size="10.5" fill="#69707d" font-weight="normal" text-anchor="start" >19:25</text>
<line x1="1798.50" y1="462.60" x2="1798.50" y2="607.70" stroke="#c6c8cc" stroke-width="1" />
<text x="1800.90" y="607.70" font-size="10.5" fill="#69707d" font-weight="normal" text-anchor="start" >19:30</text>
<line x1="1953.00" y1="596.00" x2="1953.00" y2="607.70" stroke="#eef0f4" stroke-width="1.2" />
<text x="75.20" y="617.80" font-size="10.6" fill="#69707d" font-weight="normal" text-anchor="start" >January 26, 2023</text>
<text x="0.00" y="0.00" font-size="12.3" fill="#343741" font-weight="bold" text-anchor="middle" transform="translate(36.3 529.3) rotate(-90)">Status</text>
<text x="1013.50" y="639.90" font-size="12.3" fill="#343741" font-weight="bold" text-anchor="middle" >Status - ( 0 = Disabled, 1= Enabled ) per minute</text>
<path d="M689.1 595.5 L814.9 595.5 C 820 590, 836 470, 841.9 463 L1921.5 463" fill="none" stroke="#54b399" stroke-width="2" stroke-dasharray="5 5"/>
<circle cx="997.60" cy="463.00" r="4.8" fill="#fff" stroke="#54b399" stroke-width="2"/>
<circle cx="1151.70" cy="463.00" r="4.8" fill="#fff" stroke="#54b399" stroke-width="2"/>
<circle cx="1305.80" cy="463.00" r="4.8" fill="#fff" stroke="#54b399" stroke-width="2"/>
<circle cx="1459.90" cy="463.00" r="4.8" fill="#fff" stroke="#54b399" stroke-width="2"/>
<circle cx="1614.00" cy="463.00" r="4.8" fill="#fff" stroke="#54b399" stroke-width="2"/>
<circle cx="1768.10" cy="463.00" r="4.8" fill="#fff" stroke="#54b399" stroke-width="2"/>
<circle cx="1922.20" cy="463.00" r="4.8" fill="#fff" stroke="#54b399" stroke-width="2"/>
<circle cx="1989" cy="470.9" r="4" fill="#54b399"/>
<text x="2001.50" y="474.00" font-size="12.8" fill="#343741" font-weight="normal" text-anchor="start" >test1</text>
<g fill="none" stroke="#6a707c" stroke-width="0.9"><rect x="2095.45" y="465.45" width="3.2" height="1.75" rx="0.3"/><rect x="2095.45" y="474.65" width="3.2" height="1.75" rx="0.3"/></g><rect x="2095.00" y="469.00" width="4.1" height="4.2" rx="2" fill="#8d939d"/>
<text x="16.50" y="683.70" font-size="12.2" fill="#1a1c21" font-weight="bold" text-anchor="start" >Counters</text>
<rect x="79" y="670.2" width="101" height="19.6" rx="3" fill="#d3dae6" />
<g fill="none" stroke="#343741" stroke-width="1"><circle cx="93.9" cy="680" r="5.6"/><line x1="90.6" y1="678" x2="97.2" y2="678"/><line x1="91.9" y1="680.3" x2="95.9" y2="680.3"/><line x1="93.3" y1="682.6" x2="94.5" y2="682.6"/></g>
<text x="104.30" y="683.70" font-size="12.8" fill="#1a1c21" font-weight="normal" text-anchor="start" >Panel filters</text>
<line x1="113.00" y1="715.00" x2="113.00" y2="1016.00" stroke="#eef0f4" stroke-width="1.3" />
<text x="102.60" y="1019.60" font-size="10.5" fill="#69707d" font-weight="normal" text-anchor="end" >0</text>
<line x1="113.00" y1="987.62" x2="1853.50" y2="987.62" stroke="#eceef2" stroke-width="1" stroke-dasharray="4 4"/>
<text x="102.60" y="991.22" font-size="10.5" fill="#69707d" font-weight="normal" text-anchor="end" >100,000</text>
<line x1="113.00" y1="959.24" x2="1853.50" y2="959.24" stroke="#eceef2" stroke-width="1" stroke-dasharray="4 4"/>
<text x="102.60" y="962.84" font-size="10.5" fill="#69707d" font-weight="normal" text-anchor="end" >200,000</text>
<line x1="113.00" y1="930.86" x2="1853.50" y2="930.86" stroke="#eceef2" stroke-width="1" stroke-dasharray="4 4"/>
<text x="102.60" y="934.46" font-size="10.5" fill="#69707d" font-weight="normal" text-anchor="end" >300,000</text>
<line x1="113.00" y1="902.48" x2="1853.50" y2="902.48" stroke="#eceef2" stroke-width="1" stroke-dasharray="4 4"/>
<text x="102.60" y="906.08" font-size="10.5" fill="#69707d" font-weight="normal" text-anchor="end" >400,000</text>
<line x1="113.00" y1="874.10" x2="1853.50" y2="874.10" stroke="#eceef2" stroke-width="1" stroke-dasharray="4 4"/>
<text x="102.60" y="877.70" font-size="10.5" fill="#69707d" font-weight="normal" text-anchor="end" >500,000</text>
<line x1="113.00" y1="845.72" x2="1853.50" y2="845.72" stroke="#eceef2" stroke-width="1" stroke-dasharray="4 4"/>
<text x="102.60" y="849.32" font-size="10.5" fill="#69707d" font-weight="normal" text-anchor="end" >600,000</text>
<line x1="113.00" y1="817.34" x2="1853.50" y2="817.34" stroke="#eceef2" stroke-width="1" stroke-dasharray="4 4"/>
<text x="102.60" y="820.94" font-size="10.5" fill="#69707d" font-weight="normal" text-anchor="end" >700,000</text>
<line x1="113.00" y1="788.96" x2="1853.50" y2="788.96" stroke="#eceef2" stroke-width="1" stroke-dasharray="4 4"/>
<text x="102.60" y="792.56" font-size="10.5" fill="#69707d" font-weight="normal" text-anchor="end" >800,000</text>
<line x1="113.00" y1="760.58" x2="1853.50" y2="760.58" stroke="#eceef2" stroke-width="1" stroke-dasharray="4 4"/>
<text x="102.60" y="764.18" font-size="10.5" fill="#69707d" font-weight="normal" text-anchor="end" >900,000</text>
<line x1="113.00" y1="732.20" x2="1853.50" y2="732.20" stroke="#eceef2" stroke-width="1" stroke-dasharray="4 4"/>
<text x="102.60" y="735.80" font-size="10.5" fill="#69707d" font-weight="normal" text-anchor="end" >1,000,000</text>
<line x1="113.00" y1="1016.00" x2="1853.50" y2="1016.00" stroke="#eef0f4" stroke-width="1.3" />
<line x1="141.50" y1="1016.00" x2="141.50" y2="1027.70" stroke="#eef0f4" stroke-width="1.2" />
<text x="143.80" y="1027.70" font-size="10.5" fill="#69707d" font-weight="normal" text-anchor="start" >18:35</text>
<line x1="284.15" y1="1016.00" x2="284.15" y2="1027.70" stroke="#eef0f4" stroke-width="1.2" />
<text x="286.45" y="1027.70" font-size="10.5" fill="#69707d" font-weight="normal" text-anchor="start" >18:40</text>
<line x1="426.50" y1="715.00" x2="426.50" y2="1027.70" stroke="#c6c8cc" stroke-width="1" />
<text x="429.10" y="1027.70" font-size="10.5" fill="#69707d" font-weight="normal" text-anchor="start" >18:45</text>
<line x1="569.45" y1="1016.00" x2="569.45" y2="1027.70" stroke="#eef0f4" stroke-width="1.2" />
<text x="571.75" y="1027.70" font-size="10.5" fill="#69707d" font-weight="normal" text-anchor="start" >18:50</text>
<line x1="712.10" y1="1016.00" x2="712.10" y2="1027.70" stroke="#eef0f4" stroke-width="1.2" />
<text x="714.40" y="1027.70" font-size="10.5" fill="#69707d" font-weight="normal" text-anchor="start" >18:55</text>
<line x1="854.50" y1="715.00" x2="854.50" y2="1027.70" stroke="#c6c8cc" stroke-width="1" />
<text x="857.05" y="1027.70" font-size="10.5" fill="#69707d" font-weight="normal" text-anchor="start" >19:00</text>
<line x1="997.40" y1="1016.00" x2="997.40" y2="1027.70" stroke="#eef0f4" stroke-width="1.2" />
<text x="999.70" y="1027.70" font-size="10.5" fill="#69707d" font-weight="normal" text-anchor="start" >19:05</text>
<line x1="1140.05" y1="1016.00" x2="1140.05" y2="1027.70" stroke="#eef0f4" stroke-width="1.2" />
<text x="1142.35" y="1027.70" font-size="10.5" fill="#69707d" font-weight="normal" text-anchor="start" >19:10</text>
<line x1="1282.50" y1="715.00" x2="1282.50" y2="1027.70" stroke="#c6c8cc" stroke-width="1" />
<text x="1285.00" y="1027.70" font-size="10.5" fill="#69707d" font-weight="normal" text-anchor="start" >19:15</text>
<line x1="1425.35" y1="1016.00" x2="1425.35" y2="1027.70" stroke="#eef0f4" stroke-width="1.2" />
<text x="1427.65" y="1027.70" font-size="10.5" fill="#69707d" font-weight="normal" text-anchor="start" >19:20</text>
<line x1="1568.00" y1="1016.00" x2="1568.00" y2="1027.70" stroke="#eef0f4" stroke-width="1.2" />
<text x="1570.30" y="1027.70" font-size="10.5" fill="#69707d" font-weight="normal" text-anchor="start" >19:25</text>
<line x1="1710.50" y1="715.00" x2="1710.50" y2="1027.70" stroke="#c6c8cc" stroke-width="1" />
<text x="1712.95" y="1027.70" font-size="10.5" fill="#69707d" font-weight="normal" text-anchor="start" >19:30</text>
<line x1="1853.50" y1="1016.00" x2="1853.50" y2="1027.70" stroke="#eef0f4" stroke-width="1.2" />
<text x="115.00" y="1037.80" font-size="10.6" fill="#69707d" font-weight="normal" text-anchor="start" >January 26, 2023</text>
<text x="0.00" y="0.00" font-size="12.3" fill="#343741" font-weight="bold" text-anchor="middle" transform="translate(36.3 865.5) rotate(-90)">errorMessages</text>
<text x="983.50" y="1060.30" font-size="12.3" fill="#343741" font-weight="bold" text-anchor="middle" >@timestamp per minute</text>
<line x1="683.50" y1="715.10" x2="1824.70" y2="715.10" stroke="#6092c0" stroke-width="2" stroke-dasharray="5 5"/>
<line x1="683.50" y1="998.90" x2="1824.70" y2="998.90" stroke="#d36086" stroke-width="2" stroke-dasharray="5 5"/>
<line x1="683.50" y1="1015.10" x2="1824.70" y2="1015.10" stroke="#9170b8" stroke-width="2" stroke-dasharray="5 5"/>
<circle cx="683.50" cy="715.10" r="4.8" fill="#fff" stroke="#6092c0" stroke-width="2"/>
<circle cx="826.15" cy="715.10" r="4.8" fill="#fff" stroke="#6092c0" stroke-width="2"/>
<circle cx="968.80" cy="715.10" r="4.8" fill="#fff" stroke="#6092c0" stroke-width="2"/>
<circle cx="1111.45" cy="715.10" r="4.8" fill="#fff" stroke="#6092c0" stroke-width="2"/>
<circle cx="1254.10" cy="715.10" r="4.8" fill="#fff" stroke="#6092c0" stroke-width="2"/>
<circle cx="1396.75" cy="715.10" r="4.8" fill="#fff" stroke="#6092c0" stroke-width="2"/>
<circle cx="1539.40" cy="715.10" r="4.8" fill="#fff" stroke="#6092c0" stroke-width="2"/>
<circle cx="1682.05" cy="715.10" r="4.8" fill="#fff" stroke="#6092c0" stroke-width="2"/>
<circle cx="1824.70" cy="715.10" r="4.8" fill="#fff" stroke="#6092c0" stroke-width="2"/>
<circle cx="683.50" cy="998.90" r="4.8" fill="#fff" stroke="#d36086" stroke-width="2"/>
<circle cx="826.15" cy="998.90" r="4.8" fill="#fff" stroke="#d36086" stroke-width="2"/>
<circle cx="968.80" cy="998.90" r="4.8" fill="#fff" stroke="#d36086" stroke-width="2"/>
<circle cx="1111.45" cy="998.90" r="4.8" fill="#fff" stroke="#d36086" stroke-width="2"/>
<circle cx="1254.10" cy="998.90" r="4.8" fill="#fff" stroke="#d36086" stroke-width="2"/>
<circle cx="1396.75" cy="998.90" r="4.8" fill="#fff" stroke="#d36086" stroke-width="2"/>
<circle cx="1539.40" cy="998.90" r="4.8" fill="#fff" stroke="#d36086" stroke-width="2"/>
<circle cx="1682.05" cy="998.90" r="4.8" fill="#fff" stroke="#d36086" stroke-width="2"/>
<circle cx="1824.70" cy="998.90" r="4.8" fill="#fff" stroke="#d36086" stroke-width="2"/>
<circle cx="683.50" cy="1015.10" r="4.8" fill="#fff" stroke="#9170b8" stroke-width="2"/>
<circle cx="826.15" cy="1015.10" r="4.8" fill="#fff" stroke="#9170b8" stroke-width="2"/>
<circle cx="968.80" cy="1015.10" r="4.8" fill="#fff" stroke="#9170b8" stroke-width="2"/>
<circle cx="1111.45" cy="1015.10" r="4.8" fill="#fff" stroke="#9170b8" stroke-width="2"/>
<circle cx="1254.10" cy="1015.10" r="4.8" fill="#fff" stroke="#9170b8" stroke-width="2"/>
<circle cx="1396.75" cy="1015.10" r="4.8" fill="#fff" stroke="#9170b8" stroke-width="2"/>
<circle cx="1539.40" cy="1015.10" r="4.8" fill="#fff" stroke="#9170b8" stroke-width="2"/>
<circle cx="1682.05" cy="1015.10" r="4.8" fill="#fff" stroke="#9170b8" stroke-width="2"/>
<circle cx="1824.70" cy="1015.10" r="4.8" fill="#fff" stroke="#9170b8" stroke-width="2"/>
<circle cx="1889" cy="723.1" r="4" fill="#54b399"/>
<text x="1901.50" y="726.20" font-size="12.8" fill="#343741" font-weight="normal" text-anchor="start" >test1 - errorMessages</text>
<g fill="none" stroke="#6a707c" stroke-width="0.9"><rect x="2095.45" y="717.65" width="3.2" height="1.75" rx="0.3"/><rect x="2095.45" y="726.85" width="3.2" height="1.75" rx="0.3"/></g><rect x="2095.00" y="721.20" width="4.1" height="4.2" rx="2" fill="#8d939d"/>
<circle cx="1889" cy="745.1" r="4" fill="#6092c0"/>
<text x="1901.50" y="748.20" font-size="12.8" fill="#343741" font-weight="normal" text-anchor="start" >test1 - events</text>
<g fill="none" stroke="#6a707c" stroke-width="0.9"><rect x="2095.45" y="739.65" width="3.2" height="1.75" rx="0.3"/><rect x="2095.45" y="748.85" width="3.2" height="1.75" rx="0.3"/></g><rect x="2095.00" y="743.20" width="4.1" height="4.2" rx="2" fill="#8d939d"/>
<circle cx="1889" cy="767.1" r="4" fill="#d36086"/>
<text x="1901.50" y="770.20" font-size="12.8" fill="#343741" font-weight="normal" text-anchor="start" >test1 - sentMessages</text>
<g fill="none" stroke="#6a707c" stroke-width="0.9"><rect x="2095.45" y="761.65" width="3.2" height="1.75" rx="0.3"/><rect x="2095.45" y="770.85" width="3.2" height="1.75" rx="0.3"/></g><rect x="2095.00" y="765.20" width="4.1" height="4.2" rx="2" fill="#8d939d"/>
<circle cx="1889" cy="789.1" r="4" fill="#9170b8"/>
<text x="1901.50" y="792.20" font-size="12.8" fill="#343741" font-weight="normal" text-anchor="start" >test1 - testEvents</text>
<g fill="none" stroke="#6a707c" stroke-width="0.9"><rect x="2095.45" y="783.65" width="3.2" height="1.75" rx="0.3"/><rect x="2095.45" y="792.85" width="3.2" height="1.75" rx="0.3"/></g><rect x="2095.00" y="787.20" width="4.1" height="4.2" rx="2" fill="#8d939d"/>
<text x="16.50" y="1103.90" font-size="12.2" fill="#1a1c21" font-weight="bold" text-anchor="start" >Errors</text>
<rect x="60" y="1090.2" width="102" height="19.6" rx="3" fill="#d3dae6" />
<g fill="none" stroke="#343741" stroke-width="1"><circle cx="74.9" cy="1100" r="5.6"/><line x1="71.6" y1="1098" x2="78.2" y2="1098"/><line x1="72.9" y1="1100.3" x2="76.9" y2="1100.3"/><line x1="74.3" y1="1102.6" x2="75.5" y2="1102.6"/></g>
<text x="85.30" y="1103.90" font-size="12.8" fill="#1a1c21" font-weight="normal" text-anchor="start" >Panel filters</text>
<line x1="85.00" y1="1135.40" x2="85.00" y2="1631.80" stroke="#eef0f4" stroke-width="1.3" />
<text x="74.80" y="1635.40" font-size="10.5" fill="#69707d" font-weight="normal" text-anchor="end" >0</text>
<line x1="85.00" y1="1583.80" x2="1853.30" y2="1583.80" stroke="#eceef2" stroke-width="1" stroke-dasharray="4 4"/>
<text x="74.80" y="1587.40" font-size="10.5" fill="#69707d" font-weight="normal" text-anchor="end" >20</text>
<line x1="85.00" y1="1535.80" x2="1853.30" y2="1535.80" stroke="#eceef2" stroke-width="1" stroke-dasharray="4 4"/>
<text x="74.80" y="1539.40" font-size="10.5" fill="#69707d" font-weight="normal" text-anchor="end" >40</text>
<line x1="85.00" y1="1487.80" x2="1853.30" y2="1487.80" stroke="#eceef2" stroke-width="1" stroke-dasharray="4 4"/>
<text x="74.80" y="1491.40" font-size="10.5" fill="#69707d" font-weight="normal" text-anchor="end" >60</text>
<line x1="85.00" y1="1439.80" x2="1853.30" y2="1439.80" stroke="#eceef2" stroke-width="1" stroke-dasharray="4 4"/>
<text x="74.80" y="1443.40" font-size="10.5" fill="#69707d" font-weight="normal" text-anchor="end" >80</text>
<line x1="85.00" y1="1391.80" x2="1853.30" y2="1391.80" stroke="#eceef2" stroke-width="1" stroke-dasharray="4 4"/>
<text x="74.80" y="1395.40" font-size="10.5" fill="#69707d" font-weight="normal" text-anchor="end" >100</text>
<line x1="85.00" y1="1343.80" x2="1853.30" y2="1343.80" stroke="#eceef2" stroke-width="1" stroke-dasharray="4 4"/>
<text x="74.80" y="1347.40" font-size="10.5" fill="#69707d" font-weight="normal" text-anchor="end" >120</text>
<line x1="85.00" y1="1295.80" x2="1853.30" y2="1295.80" stroke="#eceef2" stroke-width="1" stroke-dasharray="4 4"/>
<text x="74.80" y="1299.40" font-size="10.5" fill="#69707d" font-weight="normal" text-anchor="end" >140</text>
<line x1="85.00" y1="1247.80" x2="1853.30" y2="1247.80" stroke="#eceef2" stroke-width="1" stroke-dasharray="4 4"/>
<text x="74.80" y="1251.40" font-size="10.5" fill="#69707d" font-weight="normal" text-anchor="end" >160</text>
<line x1="85.00" y1="1199.80" x2="1853.30" y2="1199.80" stroke="#eceef2" stroke-width="1" stroke-dasharray="4 4"/>
<text x="74.80" y="1203.40" font-size="10.5" fill="#69707d" font-weight="normal" text-anchor="end" >180</text>
<line x1="85.00" y1="1151.80" x2="1853.30" y2="1151.80" stroke="#eceef2" stroke-width="1" stroke-dasharray="4 4"/>
<text x="74.80" y="1155.40" font-size="10.5" fill="#69707d" font-weight="normal" text-anchor="end" >200</text>
<line x1="85.00" y1="1631.80" x2="1853.30" y2="1631.80" stroke="#eef0f4" stroke-width="1.3" />
<line x1="113.80" y1="1631.80" x2="113.80" y2="1643.50" stroke="#eef0f4" stroke-width="1.2" />
<text x="116.10" y="1643.50" font-size="10.5" fill="#69707d" font-weight="normal" text-anchor="start" >18:35</text>
<line x1="258.75" y1="1631.80" x2="258.75" y2="1643.50" stroke="#eef0f4" stroke-width="1.2" />
<text x="261.05" y="1643.50" font-size="10.5" fill="#69707d" font-weight="normal" text-anchor="start" >18:40</text>
<line x1="403.50" y1="1135.40" x2="403.50" y2="1643.50" stroke="#c6c8cc" stroke-width="1" />
<text x="406.00" y="1643.50" font-size="10.5" fill="#69707d" font-weight="normal" text-anchor="start" >18:45</text>
<line x1="548.65" y1="1631.80" x2="548.65" y2="1643.50" stroke="#eef0f4" stroke-width="1.2" />
<text x="550.95" y="1643.50" font-size="10.5" fill="#69707d" font-weight="normal" text-anchor="start" >18:50</text>
<line x1="693.60" y1="1631.80" x2="693.60" y2="1643.50" stroke="#eef0f4" stroke-width="1.2" />
<text x="695.90" y="1643.50" font-size="10.5" fill="#69707d" font-weight="normal" text-anchor="start" >18:55</text>
<line x1="838.50" y1="1135.40" x2="838.50" y2="1643.50" stroke="#c6c8cc" stroke-width="1" />
<text x="840.85" y="1643.50" font-size="10.5" fill="#69707d" font-weight="normal" text-anchor="start" >19:00</text>
<line x1="983.50" y1="1631.80" x2="983.50" y2="1643.50" stroke="#eef0f4" stroke-width="1.2" />
<text x="985.80" y="1643.50" font-size="10.5" fill="#69707d" font-weight="normal" text-anchor="start" >19:05</text>
<line x1="1128.45" y1="1631.80" x2="1128.45" y2="1643.50" stroke="#eef0f4" stroke-width="1.2" />
<text x="1130.75" y="1643.50" font-size="10.5" fill="#69707d" font-weight="normal" text-anchor="start" >19:10</text>
<line x1="1273.50" y1="1135.40" x2="1273.50" y2="1643.50" stroke="#c6c8cc" stroke-width="1" />
<text x="1275.70" y="1643.50" font-size="10.5" fill="#69707d" font-weight="normal" text-anchor="start" >19:15</text>
<line x1="1418.35" y1="1631.80" x2="1418.35" y2="1643.50" stroke="#eef0f4" stroke-width="1.2" />
<text x="1420.65" y="1643.50" font-size="10.5" fill="#69707d" font-weight="normal" text-anchor="start" >19:20</text>
<line x1="1563.30" y1="1631.80" x2="1563.30" y2="1643.50" stroke="#eef0f4" stroke-width="1.2" />
<text x="1565.60" y="1643.50" font-size="10.5" fill="#69707d" font-weight="normal" text-anchor="start" >19:25</text>
<line x1="1708.50" y1="1135.40" x2="1708.50" y2="1643.50" stroke="#c6c8cc" stroke-width="1" />
<text x="1710.55" y="1643.50" font-size="10.5" fill="#69707d" font-weight="normal" text-anchor="start" >19:30</text>
<line x1="1853.30" y1="1631.80" x2="1853.30" y2="1643.50" stroke="#eef0f4" stroke-width="1.2" />
<text x="87.00" y="1653.60" font-size="10.6" fill="#69707d" font-weight="normal" text-anchor="start" >January 26, 2023</text>
<text x="0.00" y="0.00" font-size="12.3" fill="#343741" font-weight="bold" text-anchor="middle" transform="translate(36.3 1383) rotate(-90)">configurationError</text>
<text x="969.30" y="1675.80" font-size="12.3" fill="#343741" font-weight="bold" text-anchor="middle" >@timestamp per minute</text>
<line x1="664.70" y1="1135.00" x2="1824.30" y2="1135.00" stroke="#b9a888" stroke-width="2" stroke-dasharray="5 5"/>
<line x1="664.70" y1="1437.40" x2="1824.30" y2="1437.40" stroke="#d6bf57" stroke-width="2" stroke-dasharray="5 5"/>
<line x1="664.70" y1="1583.80" x2="1824.30" y2="1583.80" stroke="#d36086" stroke-width="2" stroke-dasharray="5 5"/>
<line x1="664.70" y1="1631.30" x2="1824.30" y2="1631.30" stroke="#54b399" stroke-width="2" stroke-dasharray="5 5"/>
<line x1="664.70" y1="1631.30" x2="1824.30" y2="1631.30" stroke="#6092c0" stroke-width="2" stroke-dasharray="5 5"/>
<line x1="664.70" y1="1631.30" x2="1824.30" y2="1631.30" stroke="#ca8eae" stroke-width="2" stroke-dasharray="5 5"/>
<line x1="664.70" y1="1631.30" x2="1824.30" y2="1631.30" stroke="#9170b8" stroke-width="2" stroke-dasharray="5 5"/>
<line x1="664.70" y1="1629.80" x2="1824.30" y2="1629.80" stroke="#da8b45" stroke-width="2" stroke-dasharray="5 5"/>
<circle cx="664.70" cy="1135.00" r="4.8" fill="#fff" stroke="#b9a888" stroke-width="2"/>
<circle cx="809.65" cy="1135.00" r="4.8" fill="#fff" stroke="#b9a888" stroke-width="2"/>
<circle cx="954.60" cy="1135.00" r="4.8" fill="#fff" stroke="#b9a888" stroke-width="2"/>
<circle cx="1099.55" cy="1135.00" r="4.8" fill="#fff" stroke="#b9a888" stroke-width="2"/>
<circle cx="1244.50" cy="1135.00" r="4.8" fill="#fff" stroke="#b9a888" stroke-width="2"/>
<circle cx="1389.45" cy="1135.00" r="4.8" fill="#fff" stroke="#b9a888" stroke-width="2"/>
<circle cx="1534.40" cy="1135.00" r="4.8" fill="#fff" stroke="#b9a888" stroke-width="2"/>
<circle cx="1679.35" cy="1135.00" r="4.8" fill="#fff" stroke="#b9a888" stroke-width="2"/>
<circle cx="1824.30" cy="1135.00" r="4.8" fill="#fff" stroke="#b9a888" stroke-width="2"/>
<circle cx="664.70" cy="1437.40" r="4.8" fill="#fff" stroke="#d6bf57" stroke-width="2"/>
<circle cx="809.65" cy="1437.40" r="4.8" fill="#fff" stroke="#d6bf57" stroke-width="2"/>
<circle cx="954.60" cy="1437.40" r="4.8" fill="#fff" stroke="#d6bf57" stroke-width="2"/>
<circle cx="1099.55" cy="1437.40" r="4.8" fill="#fff" stroke="#d6bf57" stroke-width="2"/>
<circle cx="1244.50" cy="1437.40" r="4.8" fill="#fff" stroke="#d6bf57" stroke-width="2"/>
<circle cx="1389.45" cy="1437.40" r="4.8" fill="#fff" stroke="#d6bf57" stroke-width="2"/>
<circle cx="1534.40" cy="1437.40" r="4.8" fill="#fff" stroke="#d6bf57" stroke-width="2"/>
<circle cx="1679.35" cy="1437.40" r="4.8" fill="#fff" stroke="#d6bf57" stroke-width="2"/>
<circle cx="1824.30" cy="1437.40" r="4.8" fill="#fff" stroke="#d6bf57" stroke-width="2"/>
<circle cx="664.70" cy="1583.80" r="4.8" fill="#fff" stroke="#d36086" stroke-width="2"/>
<circle cx="809.65" cy="1583.80" r="4.8" fill="#fff" stroke="#d36086" stroke-width="2"/>
<circle cx="954.60" cy="1583.80" r="4.8" fill="#fff" stroke="#d36086" stroke-width="2"/>
<circle cx="1099.55" cy="1583.80" r="4.8" fill="#fff" stroke="#d36086" stroke-width="2"/>
<circle cx="1244.50" cy="1583.80" r="4.8" fill="#fff" stroke="#d36086" stroke-width="2"/>
<circle cx="1389.45" cy="1583.80" r="4.8" fill="#fff" stroke="#d36086" stroke-width="2"/>
<circle cx="1534.40" cy="1583.80" r="4.8" fill="#fff" stroke="#d36086" stroke-width="2"/>
<circle cx="1679.35" cy="1583.80" r="4.8" fill="#fff" stroke="#d36086" stroke-width="2"/>
<circle cx="1824.30" cy="1583.80" r="4.8" fill="#fff" stroke="#d36086" stroke-width="2"/>
<circle cx="664.70" cy="1629.50" r="4.8" fill="#fff" stroke="#da8b45" stroke-width="2"/>
<circle cx="809.65" cy="1629.50" r="4.8" fill="#fff" stroke="#da8b45" stroke-width="2"/>
<circle cx="954.60" cy="1629.50" r="4.8" fill="#fff" stroke="#da8b45" stroke-width="2"/>
<circle cx="1099.55" cy="1629.50" r="4.8" fill="#fff" stroke="#da8b45" stroke-width="2"/>
<circle cx="1244.50" cy="1629.50" r="4.8" fill="#fff" stroke="#da8b45" stroke-width="2"/>
<circle cx="1389.45" cy="1629.50" r="4.8" fill="#fff" stroke="#da8b45" stroke-width="2"/>
<circle cx="1534.40" cy="1629.50" r="4.8" fill="#fff" stroke="#da8b45" stroke-width="2"/>
<circle cx="1679.35" cy="1629.50" r="4.8" fill="#fff" stroke="#da8b45" stroke-width="2"/>
<circle cx="1824.30" cy="1629.50" r="4.8" fill="#fff" stroke="#da8b45" stroke-width="2"/>
<circle cx="1889" cy="1143" r="4" fill="#54b399"/>
<text x="1901.50" y="1146.10" font-size="12.8" fill="#343741" font-weight="normal" text-anchor="start" >test1 - configurationError</text>
<g fill="none" stroke="#6a707c" stroke-width="0.9"><rect x="2095.45" y="1137.55" width="3.2" height="1.75" rx="0.3"/><rect x="2095.45" y="1146.75" width="3.2" height="1.75" rx="0.3"/></g><rect x="2095.00" y="1141.10" width="4.1" height="4.2" rx="2" fill="#8d939d"/>
<circle cx="1889" cy="1165" r="4" fill="#6092c0"/>
<text x="1901.50" y="1168.10" font-size="12.8" fill="#343741" font-weight="normal" text-anchor="start" >test1 - connectionError</text>
<g fill="none" stroke="#6a707c" stroke-width="0.9"><rect x="2095.45" y="1159.55" width="3.2" height="1.75" rx="0.3"/><rect x="2095.45" y="1168.75" width="3.2" height="1.75" rx="0.3"/></g><rect x="2095.00" y="1163.10" width="4.1" height="4.2" rx="2" fill="#8d939d"/>
<circle cx="1889" cy="1187" r="4" fill="#d36086"/>
<text x="1901.50" y="1190.10" font-size="12.8" fill="#343741" font-weight="normal" text-anchor="start" >test1 - serviceError</text>
<g fill="none" stroke="#6a707c" stroke-width="0.9"><rect x="2095.45" y="1181.55" width="3.2" height="1.75" rx="0.3"/><rect x="2095.45" y="1190.75" width="3.2" height="1.75" rx="0.3"/></g><rect x="2095.00" y="1185.10" width="4.1" height="4.2" rx="2" fill="#8d939d"/>
<circle cx="1889" cy="1209" r="4" fill="#9170b8"/>
<text x="1901.50" y="1212.10" font-size="12.8" fill="#343741" font-weight="normal" text-anchor="start" >test1 - statusCode2xx</text>
<g fill="none" stroke="#6a707c" stroke-width="0.9"><rect x="2095.45" y="1203.55" width="3.2" height="1.75" rx="0.3"/><rect x="2095.45" y="1212.75" width="3.2" height="1.75" rx="0.3"/></g><rect x="2095.00" y="1207.10" width="4.1" height="4.2" rx="2" fill="#8d939d"/>
<circle cx="1889" cy="1231" r="4" fill="#ca8eae"/>
<text x="1901.50" y="1234.10" font-size="12.8" fill="#343741" font-weight="normal" text-anchor="start" >test1 - statusCode300</text>
<g fill="none" stroke="#6a707c" stroke-width="0.9"><rect x="2095.45" y="1225.55" width="3.2" height="1.75" rx="0.3"/><rect x="2095.45" y="1234.75" width="3.2" height="1.75" rx="0.3"/></g><rect x="2095.00" y="1229.10" width="4.1" height="4.2" rx="2" fill="#8d939d"/>
<circle cx="1889" cy="1253" r="4" fill="#d6bf57"/>
<text x="1901.50" y="1256.10" font-size="12.8" fill="#343741" font-weight="normal" text-anchor="start" >test1 - statusCode400</text>
<g fill="none" stroke="#6a707c" stroke-width="0.9"><rect x="2095.45" y="1247.55" width="3.2" height="1.75" rx="0.3"/><rect x="2095.45" y="1256.75" width="3.2" height="1.75" rx="0.3"/></g><rect x="2095.00" y="1251.10" width="4.1" height="4.2" rx="2" fill="#8d939d"/>
<circle cx="1889" cy="1275" r="4" fill="#b9a888"/>
<text x="1901.50" y="1278.10" font-size="12.8" fill="#343741" font-weight="normal" text-anchor="start" >test1 - statusCode500</text>
<g fill="none" stroke="#6a707c" stroke-width="0.9"><rect x="2095.45" y="1269.55" width="3.2" height="1.75" rx="0.3"/><rect x="2095.45" y="1278.75" width="3.2" height="1.75" rx="0.3"/></g><rect x="2095.00" y="1273.10" width="4.1" height="4.2" rx="2" fill="#8d939d"/>
<circle cx="1889" cy="1297" r="4" fill="#da8b45"/>
<text x="1901.50" y="1300.10" font-size="12.8" fill="#343741" font-weight="normal" text-anchor="start" >test1 - timeout</text>
<g fill="none" stroke="#6a707c" stroke-width="0.9"><rect x="2095.45" y="1291.55" width="3.2" height="1.75" rx="0.3"/><rect x="2095.45" y="1300.75" width="3.2" height="1.75" rx="0.3"/></g><rect x="2095.00" y="1295.10" width="4.1" height="4.2" rx="2" fill="#8d939d"/>
</svg></div></body></html>
